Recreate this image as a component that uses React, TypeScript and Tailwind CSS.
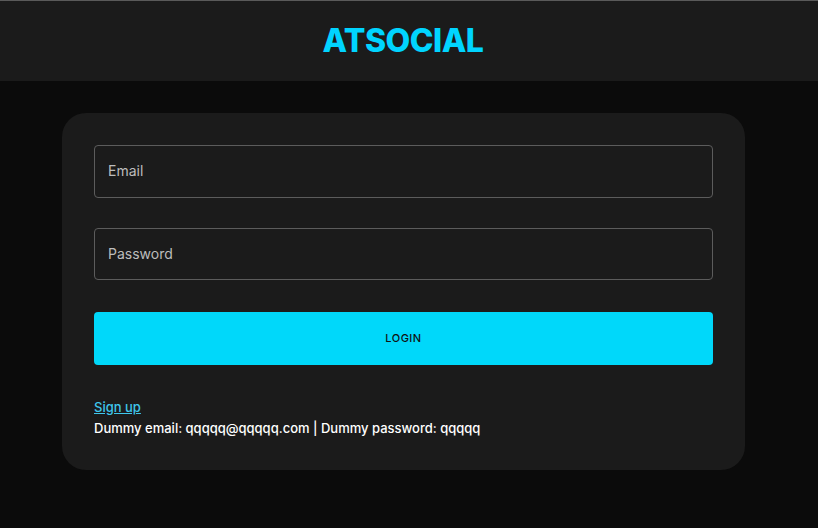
export default function App() {
  return (
    <div className="min-h-[528px] bg-[#0b0b0b] font-['Inter','Roboto',sans-serif]">
      <header className="h-[81px] border-t border-[#5a5a5a] bg-[#1b1b1b] flex items-center justify-center">
        <h1 className="text-[32px] font-extrabold tracking-[-0.5px] text-[#00d4ff] mr-[12px]">ATSOCIAL</h1>
      </header>
      <main className="pt-8 pl-[62px]">
        <div className="w-[683px] h-[357px] rounded-[24px] bg-[#1b1b1b] px-8 pt-8">
          <div className="h-[53px] rounded border border-[#5c5c5c] flex items-center px-[13px] pb-[2px] text-[14px] text-[#bdbdbd]">
            Email
          </div>
          <div className="mt-[30px] h-[52px] rounded border border-[#5c5c5c] flex items-center px-[13px] pb-[2px] text-[14px] text-[#bdbdbd]">
            Password
          </div>
          <button className="mt-[32px] w-full h-[53px] rounded bg-[#00d8fa] text-[11px] font-medium tracking-[0.5px] text-[#111]">
            LOGIN
          </button>
          <div className="mt-[32px] text-[13px] font-medium leading-[21px]">
            <a href="#" className="text-[#3fc7ec] underline">Sign up</a>
            <p className="text-white">Dummy email: qqqqq@qqqqq.com | Dummy password: qqqqq</p>
          </div>
        </div>
      </main>
    </div>
  );
}
